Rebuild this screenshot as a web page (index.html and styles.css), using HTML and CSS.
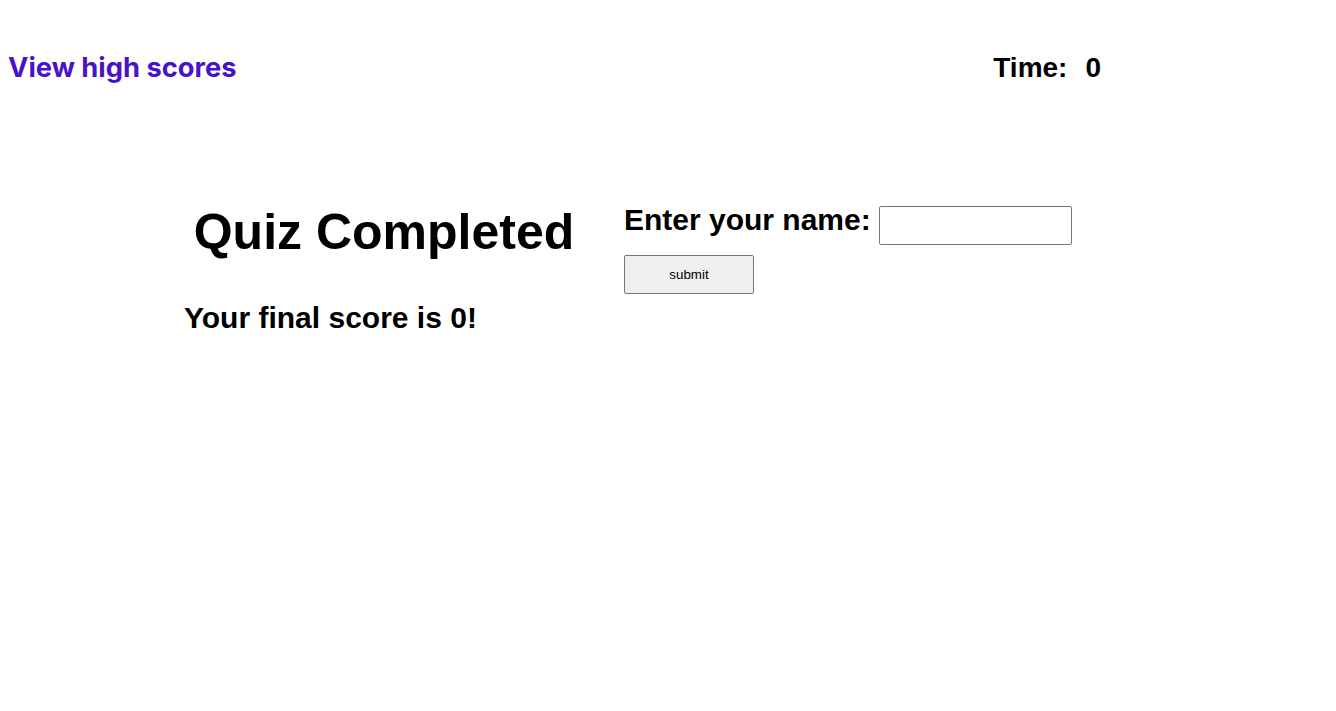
FILE: index.html
```html
<!DOCTYPE html>
<html lang="en">
<head>
<meta charset="utf-8">
<title>Quiz</title>
<link rel="stylesheet" href="styles.css">
</head>
<body>
<header class="top-bar">
  <a class="high-scores" href="#">View high scores</a>
  <div class="timer"><span class="timer-label">Time:</span><span class="timer-value">0</span></div>
</header>
<main class="results">
  <section class="summary">
    <h1 class="title">Quiz Completed</h1>
    <p class="final-score">Your final score is 0!</p>
  </section>
  <section class="entry">
    <div class="name-row">
      <label class="name-label" for="name">Enter your name:</label>
      <input class="name-input" id="name" type="text">
    </div>
    <button class="submit-btn" type="button">submit</button>
  </section>
</main>
</body>
</html>
```

FILE: styles.css
```css
html, body {
  margin: 0;
  padding: 0;
  background: #fff;
}

body {
  font-family: "Liberation Sans", Arial, sans-serif;
  color: #000;
}

.top-bar {
  display: flex;
  justify-content: space-between;
  align-items: baseline;
  padding: 51px 235px 0 8px;
}

.high-scores {
  font-family: Inter, "Liberation Sans", sans-serif;
  font-weight: 700;
  font-size: 27.3px;
  color: #4a12c8;
  text-decoration: none;
}

.timer {
  font-size: 28px;
  font-weight: 700;
  display: flex;
  gap: 18px;
}

.results {
  display: grid;
  grid-template-columns: 400px 1fr;
  column-gap: 40px;
  align-items: start;
  margin: 119px 184px 0 184px;
}

.title {
  margin: 0;
  font-size: 50px;
  font-weight: 700;
  text-align: center;
  line-height: normal;
}

.final-score {
  margin: 40px 0 0 0;
  font-size: 30px;
  font-weight: 700;
}

.name-row {
  display: block;
}

.name-label {
  font-size: 30px;
  font-weight: 700;
}

.name-input {
  width: 193px;
  height: 39px;
  box-sizing: border-box;
  border: 1px solid #767676;
  border-radius: 2px;
  margin-left: 4px;
  padding: 1px 2px;
  font-family: "Liberation Sans", Arial, sans-serif;
  font-size: 13.33px;
  vertical-align: baseline;
}

.submit-btn {
  display: block;
  margin-top: 10px;
  width: 130px;
  height: 39px;
  box-sizing: border-box;
  border: 1px solid #767676;
  border-radius: 2px;
  background: #efefef;
  font-family: "Liberation Sans", Arial, sans-serif;
  font-size: 13.33px;
  color: #000;
}
```
